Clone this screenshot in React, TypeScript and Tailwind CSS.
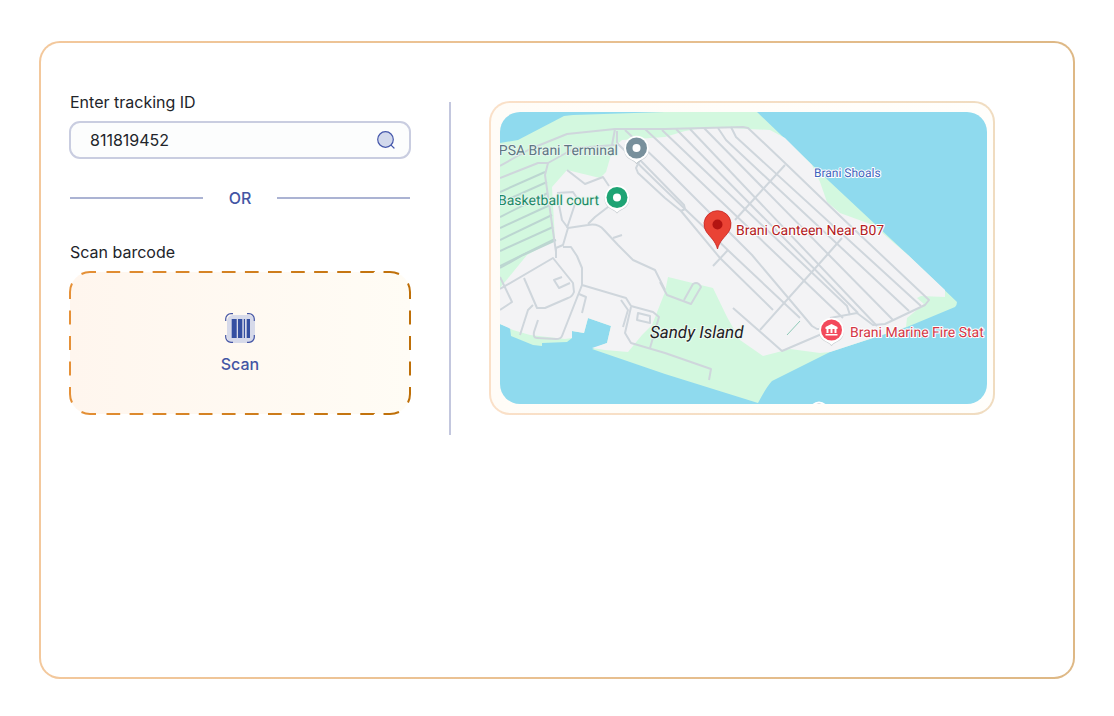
import React, { useState } from 'react';

const FIELD_ROADS = [
  'M500 192L545 172', 'M500 203L547 182', 'M500 217L548 193', 'M500 228L550 205',
  'M500 240L552 215', 'M500 251L553 227', 'M500 266L555 239', 'M500 268L523 255L556 240',
];

const YARD_ROADS = [
  'M640 160L636 168L638 173L665 198L681 211L685 209L684 205L640 160',
  'M681 211L720 258L773 310',
  'M617 131L617 143L660 185L733 255L800 318',
  'M625 130L660 163L752 255L812 326L817 329L830 329',
  'M645 129L660 143L843 318',
  'M662 130L847 306L850 315',
  'M676 129L858 313',
  'M690 129L877 326',
  'M704 128L893 320',
  'M718 128L726 140L909 311',
  'M731 127L736 137L921 306',
];

const ROADS = [
  'M500 166L530 149L567 134L615 129L665 129L743 127L748 128L785 163L840 216L929 300L925 305L885 324L873 325L857 313L830 318',
  'M500 178L538 163L548 163L545 175L556 252',
  'M548 163L575 148L615 145M615 129L612 145',
  'M567 170L585 184L603 177L609 186',
  'M557 193L573 192L577 198L567 228',
  'M557 195L562 220L568 228L588 225Q598 223 604 230L618 245L633 260L655 270L665 290',
  'M613 238L622 235',
  'M588 224L595 217L608 207',
  'M568 228L563 245L556 248L556 258M563 247L571 247L577 256L582 268L582 285L562 336Q561 339 556 339L537 338Q533 338 534 332L538 320',
  'M500 289L553 258L573 283L574 292Q572 297 568 298L545 308L537 308L524 278',
  'M533 305L528 310L520 335',
  'M500 277L512 302L500 310',
  'M562 277L554 280L559 288L570 283',
  'M579 294L586 297L582 313',
  'M582 285L626 298L631 306L653 312L659 317L650 348',
  'M631 307L625 333L631 343L665 353L711 369L709 380',
  'M621 300L628 310L623 327',
  'M638 313L650 316L650 323L637 320Z',
  'M660 282L667 295L691 304L701 287Q698 281 693 284L684 300',
  'M785 165L735 220',
  'M728 250L713 266',
  'M842 238L827 255L760 330',
  'M733 308L782 351L838 327',
];

interface PoiProps {
  x: number;
  y: number;
  fill: string;
  children: React.ReactNode;
}

const Poi: React.FC<PoiProps> = ({ x, y, fill, children }) => (
  <g transform={`translate(${x} ${y})`}>
    <path d="M0 16C-2 13 -5 12.500 -8 10.500A12.500 12.500 0 1 1 8 10.500C5 12.500 2 13 0 16Z" fill="#9aa5ab" opacity="0.5" />
    <path d="M0 15C-2 12.500 -5 12 -8 9.800A12.500 12.500 0 1 1 8 9.800C5 12 2 12.500 0 15Z" fill="#fff" />
    <circle r="10.500" fill={fill} />
    {children}
  </g>
);

const TrackingMap = () => (
  <svg
    viewBox="500 112 487 292"
    role="img"
    aria-label="Map of Brani"
    className="block w-full rounded-[20px] bg-[#8fdaee]"
    fontFamily="Roboto, sans-serif"
    fontSize="14"
    textRendering="geometricPrecision"
  >
    {/* Island, green areas first and the built-up ground over them */}
    <path
      fill="#d3f8df"
      d="M500 143L518 140L564 116L573 115L665 112H757L830 182L908 255L957 302Q957 305 955 307L907 327L830 352L772 381Q767 386 758 403L665 374L592 349L607 343L611 326L588 318L584 333L572 331V338L567 342L542 343V346L533 345L511 336L510 328L500 324Z"
    />
    <path
      fill="#f3f3f5"
      d="M552 187L567 170L600 178L606 172L613 148L622 140L665 137L685 131L710 127L770 130L785 138L812 165L820 182L827 202L840 213L873 225L908 255L945 290V297L921 296L917 298L924 304L907 318L906 327L830 352L820 353L790 349L763 356L740 340L727 317L713 288L668 277L665 292L652 325L642 335L628 352L605 350L592 348L607 343L611 326L588 318L584 333L572 331V338L565 339L530 335L513 330L500 324V288L527 255L555 240Z"
    />
    <g fill="none" stroke="#bcd6d1" strokeWidth="2">
      {FIELD_ROADS.map(d => <path key={d} d={d} />)}
    </g>
    <g fill="none" stroke="#cfd6dc" strokeWidth="2" strokeLinejoin="round">
      {YARD_ROADS.map(d => <path key={d} d={d} />)}
      {ROADS.map(d => <path key={d} d={d} />)}
    </g>
    <path d="M800 321L787 335" stroke="#8fcab8" />

    {/* Place labels */}
    <g stroke="#fff" strokeWidth="2" strokeLinejoin="round" paintOrder="stroke">
      <text x="618" y="155" textAnchor="end" fill="#5f7683" stroke="#e6f6ee">PSA Brani Terminal</text>
      <text x="599" y="205" textAnchor="end" fill="#1d8a66" stroke="#e6f6ee">Basketball court</text>
      <text x="814" y="177" fontSize="12" fill="#3f64bd">Brani Shoals</text>
      <text x="736" y="235" fill="#b3201d">Brani Canteen Near B07</text>
      <text x="850" y="337" fill="#d43645">Brani Marine Fire Stat</text>
      <text x="650" y="338" fontSize="17" fontStyle="italic" fill="#1f2124" stroke="#eefaf2">Sandy Island</text>
    </g>

    {/* Pins */}
    <Poi x={636.5} y={148} fill="#78909c"><circle r="4" fill="#fff" /></Poi>
    <Poi x={617} y={197.5} fill="#1ea474"><circle r="4" fill="#fff" /></Poi>
    <Poi x={831.5} y={330} fill="#f3495c">
      <path d="M0 -6L6 -3V-1H-6V-3ZM-5 -1H-3V3H-5ZM-1 -1H1V3H-1ZM3 -1H5V3H3ZM-6 4H6V5.500H-6Z" fill="#fff" />
    </Poi>
    <path d="M717.500 249C715.500 241 710 237 706.500 232A13.500 13.500 0 1 1 728.500 232C725 237 719.500 241 717.500 249Z" fill="#ea4335" stroke="#c5221f" strokeWidth="0.800" />
    <circle cx="717.500" cy="224.500" r="5" fill="#b31412" />
    <circle cx="819" cy="411" r="9.500" fill="#fff" />
    <circle cx="819" cy="411" r="7.500" fill="#a9b8c4" />
  </svg>
);

const ScanOutline = () => (
  <svg
    viewBox="69 271 342 144"
    preserveAspectRatio="none"
    className="absolute inset-0 h-full w-full"
    fill="none"
    stroke="url(#scan-stroke)"
    strokeWidth="2"
    aria-hidden="true"
  >
    <defs>
      <linearGradient id="scan-stroke" gradientUnits="userSpaceOnUse" x1="70" y1="272" x2="410" y2="300">
        <stop offset="0" stopColor="#e69138" />
        <stop offset="1" stopColor="#be6f08" />
      </linearGradient>
      <linearGradient id="scan-fill" x1="0" y1="0" x2="1" y2="0">
        <stop offset="0" stopColor="#fff6ee" />
        <stop offset="1" stopColor="#fffcf5" />
      </linearGradient>
    </defs>
    <rect x="70" y="272" width="340" height="142" rx="20" fill="url(#scan-fill)" stroke="none" />
    <path d="M81.500 274Q85.500 272 90 272H96M399 274Q394.500 272 390 272H383.500M81.500 412Q85.500 414 90 414H96M399 412Q394.500 414 390 414H383.500" />
    <path d="M72 283.500Q70 287.500 70 292V299M408 283.500Q410 287.500 410 292V299M72 402.500Q70 398.500 70 394V387M408 402.500Q410 398.500 410 394V387" />
    <path d="M106.500 272H373.800V272.010M106.500 414H373.800V414.010" strokeDasharray="13.700 9.370" />
    <path d="M70 310.500V375.500H70.010M410 310.500V375.500H410.010" strokeDasharray="14 11.500" />
  </svg>
);

const SearchIcon = () => (
  <svg viewBox="0 0 20 20" className="h-5 w-5" fill="none" stroke="#4557ab" strokeWidth="1.200" strokeLinecap="round">
    <circle cx="9.500" cy="9.500" r="7.800" fill="#d2d9ec" />
    <path d="M15.300 15.300L18 18" />
  </svg>
);

const BarcodeIcon = () => (
  <svg viewBox="0 0 30 30" className="h-[30px] w-[30px]" fill="none">
    <rect x="2" y="2" width="28" height="28" rx="6" fill="#d7daea" />
    <path
      d="M0.700 8V6A5.300 5.300 0 0 1 6 0.700H8M22 0.700H24A5.300 5.300 0 0 1 29.300 6V8M29.300 22V24A5.300 5.300 0 0 1 24 29.300H22M8 29.300H6A5.300 5.300 0 0 1 0.700 24V22"
      stroke="#4455a5"
      strokeWidth="1.200"
    />
    <path d="M6.700 6H11.700V25H6.700ZM13 6H17.300V25H13ZM18.800 6H20V25H18.800ZM21.700 6H25V25H21.700Z" fill="#344fa1" />
  </svg>
);

export default function App() {
  const [trackingId, setTrackingId] = useState('811819452');

  const handleSubmit = (e: React.FormEvent) => {
    e.preventDefault();
  };

  return (
    <main className="flex min-h-screen bg-white px-[39px] pt-[41px] pb-[37px] font-['Inter',sans-serif] text-base text-[#22242a]">
      <div className="flex-1 rounded-[21px] border-2 border-transparent px-7 pt-[47px] [background:linear-gradient(#fff,#fff)_padding-box,linear-gradient(90deg,#f3c89c,#deb885)_border-box]">
        <div className="flex items-start">
          <form onSubmit={handleSubmit} className="w-full max-w-[342px] pb-5">
            <label htmlFor="tracking-id" className="block pl-px">Enter tracking ID</label>
            <div className="mt-[7px] flex h-[38px] items-center rounded-[11px] border-2 border-[#c9cde0] bg-[#fcfdfd] pr-[13px] pl-[19px]">
              <input
                id="tracking-id"
                type="text"
                name="trackingId"
                value={trackingId}
                onChange={e => setTrackingId(e.target.value)}
                className="min-w-0 flex-1 bg-transparent outline-none"
              />
              <button type="submit" aria-label="Search">
                <SearchIcon />
              </button>
            </div>

            <div className="mt-[27px] flex items-center px-px font-medium text-[#4355a4]">
              <div className="h-0.5 flex-1 bg-[#abb3d3]"></div>
              <span className="w-[74px] text-center">OR</span>
              <div className="h-0.5 flex-1 bg-[#abb3d3]"></div>
            </div>

            <p id="scan-label" className="mt-[30px] pl-px">Scan barcode</p>
            <button
              type="button"
              className="relative mt-[7px] flex h-36 w-full items-center justify-center pt-0.5"
            >
              <ScanOutline />
              <span className="relative flex flex-col items-center gap-[9px] font-medium text-[#4355a4]">
                <BarcodeIcon />
                Scan
              </span>
            </button>
          </form>

          <div className="mx-[38px] mt-3 w-0.5 shrink-0 self-stretch bg-[#c3c7de]"></div>

          <div className="mt-[11px] max-w-[506px] flex-1 rounded-[21px] border-2 border-transparent py-[9px] pr-1.5 pl-[9px] [background:linear-gradient(90deg,#fffcf7,#fffefb)_padding-box,linear-gradient(90deg,#fae0c8,#f0dcc0)_border-box]">
            <TrackingMap />
          </div>
        </div>
      </div>
    </main>
  );
}
